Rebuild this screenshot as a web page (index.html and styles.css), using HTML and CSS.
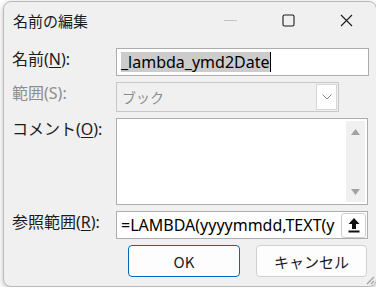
FILE: index.html
```html
<!DOCTYPE html>
<html lang="ja">
<head>
    <meta charset="UTF-8">
    <title>名前の編集</title>
    <link rel="stylesheet" href="styles.css">
</head>
<body>
    <div class="window">
        <div class="titlebar">
            <span class="title">名前の編集</span>
            <div class="caption">
                <span class="cap-btn">
                    <svg width="13" height="13" viewBox="0 0 13 13"><line x1="0" y1="6.5" x2="13" y2="6.5" stroke="#c4c4c4" stroke-width="1"/></svg>
                </span>
                <span class="cap-btn">
                    <svg width="13" height="13" viewBox="0 0 13 13"><rect x="1" y="1" width="11" height="11" rx="1.5" fill="none" stroke="#1b1b1b" stroke-width="1.1"/></svg>
                </span>
                <span class="cap-btn">
                    <svg width="13" height="13" viewBox="0 0 13 13"><path d="M1 1 L12 12 M12 1 L1 12" stroke="#1b1b1b" stroke-width="1.1"/></svg>
                </span>
            </div>
        </div>

        <div class="form">
            <label class="label">名前(<u>N</u>):</label>
            <div class="field name-field">
                <span class="selected">_lambda_ymd2Date</span><span class="caret"></span>
            </div>

            <label class="label disabled">範囲(S):</label>
            <div class="select-field">
                <span class="select-text">ブック</span>
                <span class="drop-btn">
                    <svg width="10" height="6" viewBox="0 0 10 6"><path d="M0.5 0.5 L5 5 L9.5 0.5" fill="none" stroke="#8a8a8a" stroke-width="1"/></svg>
                </span>
            </div>

            <label class="label">コメント(<u>O</u>):</label>
            <div class="field comment-field">
                <div class="scrollbar">
                    <svg width="9" height="6" viewBox="0 0 9 6"><path d="M4.5 0 L9 6 L0 6 Z" fill="#a2a2a2"/></svg>
                    <svg width="9" height="6" viewBox="0 0 9 6"><path d="M0 0 L9 0 L4.5 6 Z" fill="#a2a2a2"/></svg>
                </div>
            </div>

            <label class="label">参照範囲(<u>R</u>):</label>
            <div class="field ref-field">
                <span class="ref-text">=LAMBDA(yyyymmdd,TEXT(y</span>
                <span class="ref-btn">
                    <svg width="12" height="15" viewBox="0 0 12 15"><path d="M6 0 L11.5 6 L8 6 L8 11 L4 11 L4 6 L0.5 6 Z" fill="#111"/><rect x="0.5" y="12.5" width="11" height="2" fill="#111"/></svg>
                </span>
            </div>

            <div class="buttons">
                <button class="btn primary">OK</button>
                <button class="btn">キャンセル</button>
            </div>
        </div>

        <svg class="grip" width="10" height="10" viewBox="0 0 10 10"><path d="M9 2 L2 9 M9 6 L6 9" stroke="#a0a0a0" stroke-width="1.2"/></svg>
    </div>
</body>
</html>
```

FILE: styles.css
```css
* {
  box-sizing: border-box;
}

body {
  margin: 0;
  background-color: #ffffff;
  font-family: "Noto Sans CJK JP", "Noto Sans", sans-serif;
  color: #1b1b1b;
  overflow: hidden;
}

.window {
  position: relative;
  margin: 1px 0 0 3px;
  width: 374px;
  height: 286px;
  background-color: #f0f0f0;
  border: 1px solid #b9b9b9;
  border-radius: 8px;
  box-shadow: 0 2px 6px rgba(0, 0, 0, 0.25);
}

.titlebar {
  display: flex;
  align-items: center;
  height: 36px;
  padding-left: 9px;
}

.title {
  flex: 1;
  font-size: 15px;
}

.caption {
  display: flex;
  margin-right: 1px;
}

.cap-btn {
  width: 58px;
  display: flex;
  justify-content: center;
}

.form {
  display: grid;
  grid-template-columns: 104px 253px;
  grid-template-rows: 28px 30px 87px 28px 32px;
  row-gap: 6px;
  padding: 10px 0 0 8px;
}

/* Latin glyphs of the labels come from Noto Sans, kanji from the CJK face */
.label {
  font-family: "Noto Sans", "Noto Sans CJK JP", sans-serif;
  font-size: 16px;
  line-height: 20px;
  padding-top: 1px;
}

.label u {
  text-underline-offset: 2px;
}

.label.disabled {
  color: #8d8d8d;
}

.field {
  background-color: #ffffff;
  border: 1px solid #adadad;
  overflow: hidden;
}

.name-field {
  display: flex;
  align-items: center;
  padding-left: 4px;
  font-family: "Noto Sans", sans-serif;
  font-size: 16px;
}

.selected {
  background-color: #cccccc;
  line-height: 20px;
  color: #000;
}

.caret {
  width: 1px;
  height: 20px;
  background-color: #000;
}

.select-field {
  display: flex;
  align-items: center;
  width: 223px;
  border: 1px solid #c7c7c7;
  background-color: #f0f0f0;
  padding: 1px;
}

.select-text {
  flex: 1;
  padding-left: 4px;
  font-size: 14px;
  color: #8d8d8d;
}

.drop-btn {
  width: 21px;
  height: 100%;
  display: flex;
  align-items: center;
  justify-content: center;
  background-color: #ffffff;
  border: 1px solid #d6d6d6;
}

.comment-field {
  display: flex;
  justify-content: flex-end;
  width: 252px;
  padding: 2px;
}

.scrollbar {
  width: 19px;
  background-color: #f0f0f0;
  display: flex;
  flex-direction: column;
  justify-content: space-between;
  align-items: center;
  padding: 8px 0 7px;
}

.ref-field {
  display: flex;
  align-items: center;
  width: 252px;
  padding: 1px 1px 1px 4px;
}

.ref-text {
  flex: 1;
  overflow: hidden;
  white-space: nowrap;
  font-family: "Noto Sans", sans-serif;
  font-size: 16px;
  color: #000;
}

.ref-btn {
  width: 25px;
  height: 25px;
  margin-left: 3px;
  display: flex;
  align-items: center;
  justify-content: center;
  background-color: #ffffff;
  border: 1px solid #cfcfcf;
  border-radius: 3px;
}

.buttons {
  grid-column: 2;
  display: flex;
  justify-content: flex-end;
  gap: 16px;
  padding-right: 2px;
}

.btn {
  width: 111px;
  height: 32px;
  font-family: "Noto Sans CJK JP", sans-serif;
  font-size: 15px;
  color: #1b1b1b;
  background-color: #fdfdfd;
  border: 1px solid #d0d0d0;
  border-radius: 4px;
}

.btn.primary {
  width: 112px;
  border: 1px solid #0067c0;
}

.grip {
  position: absolute;
  right: 1px;
  bottom: 1px;
}
```
